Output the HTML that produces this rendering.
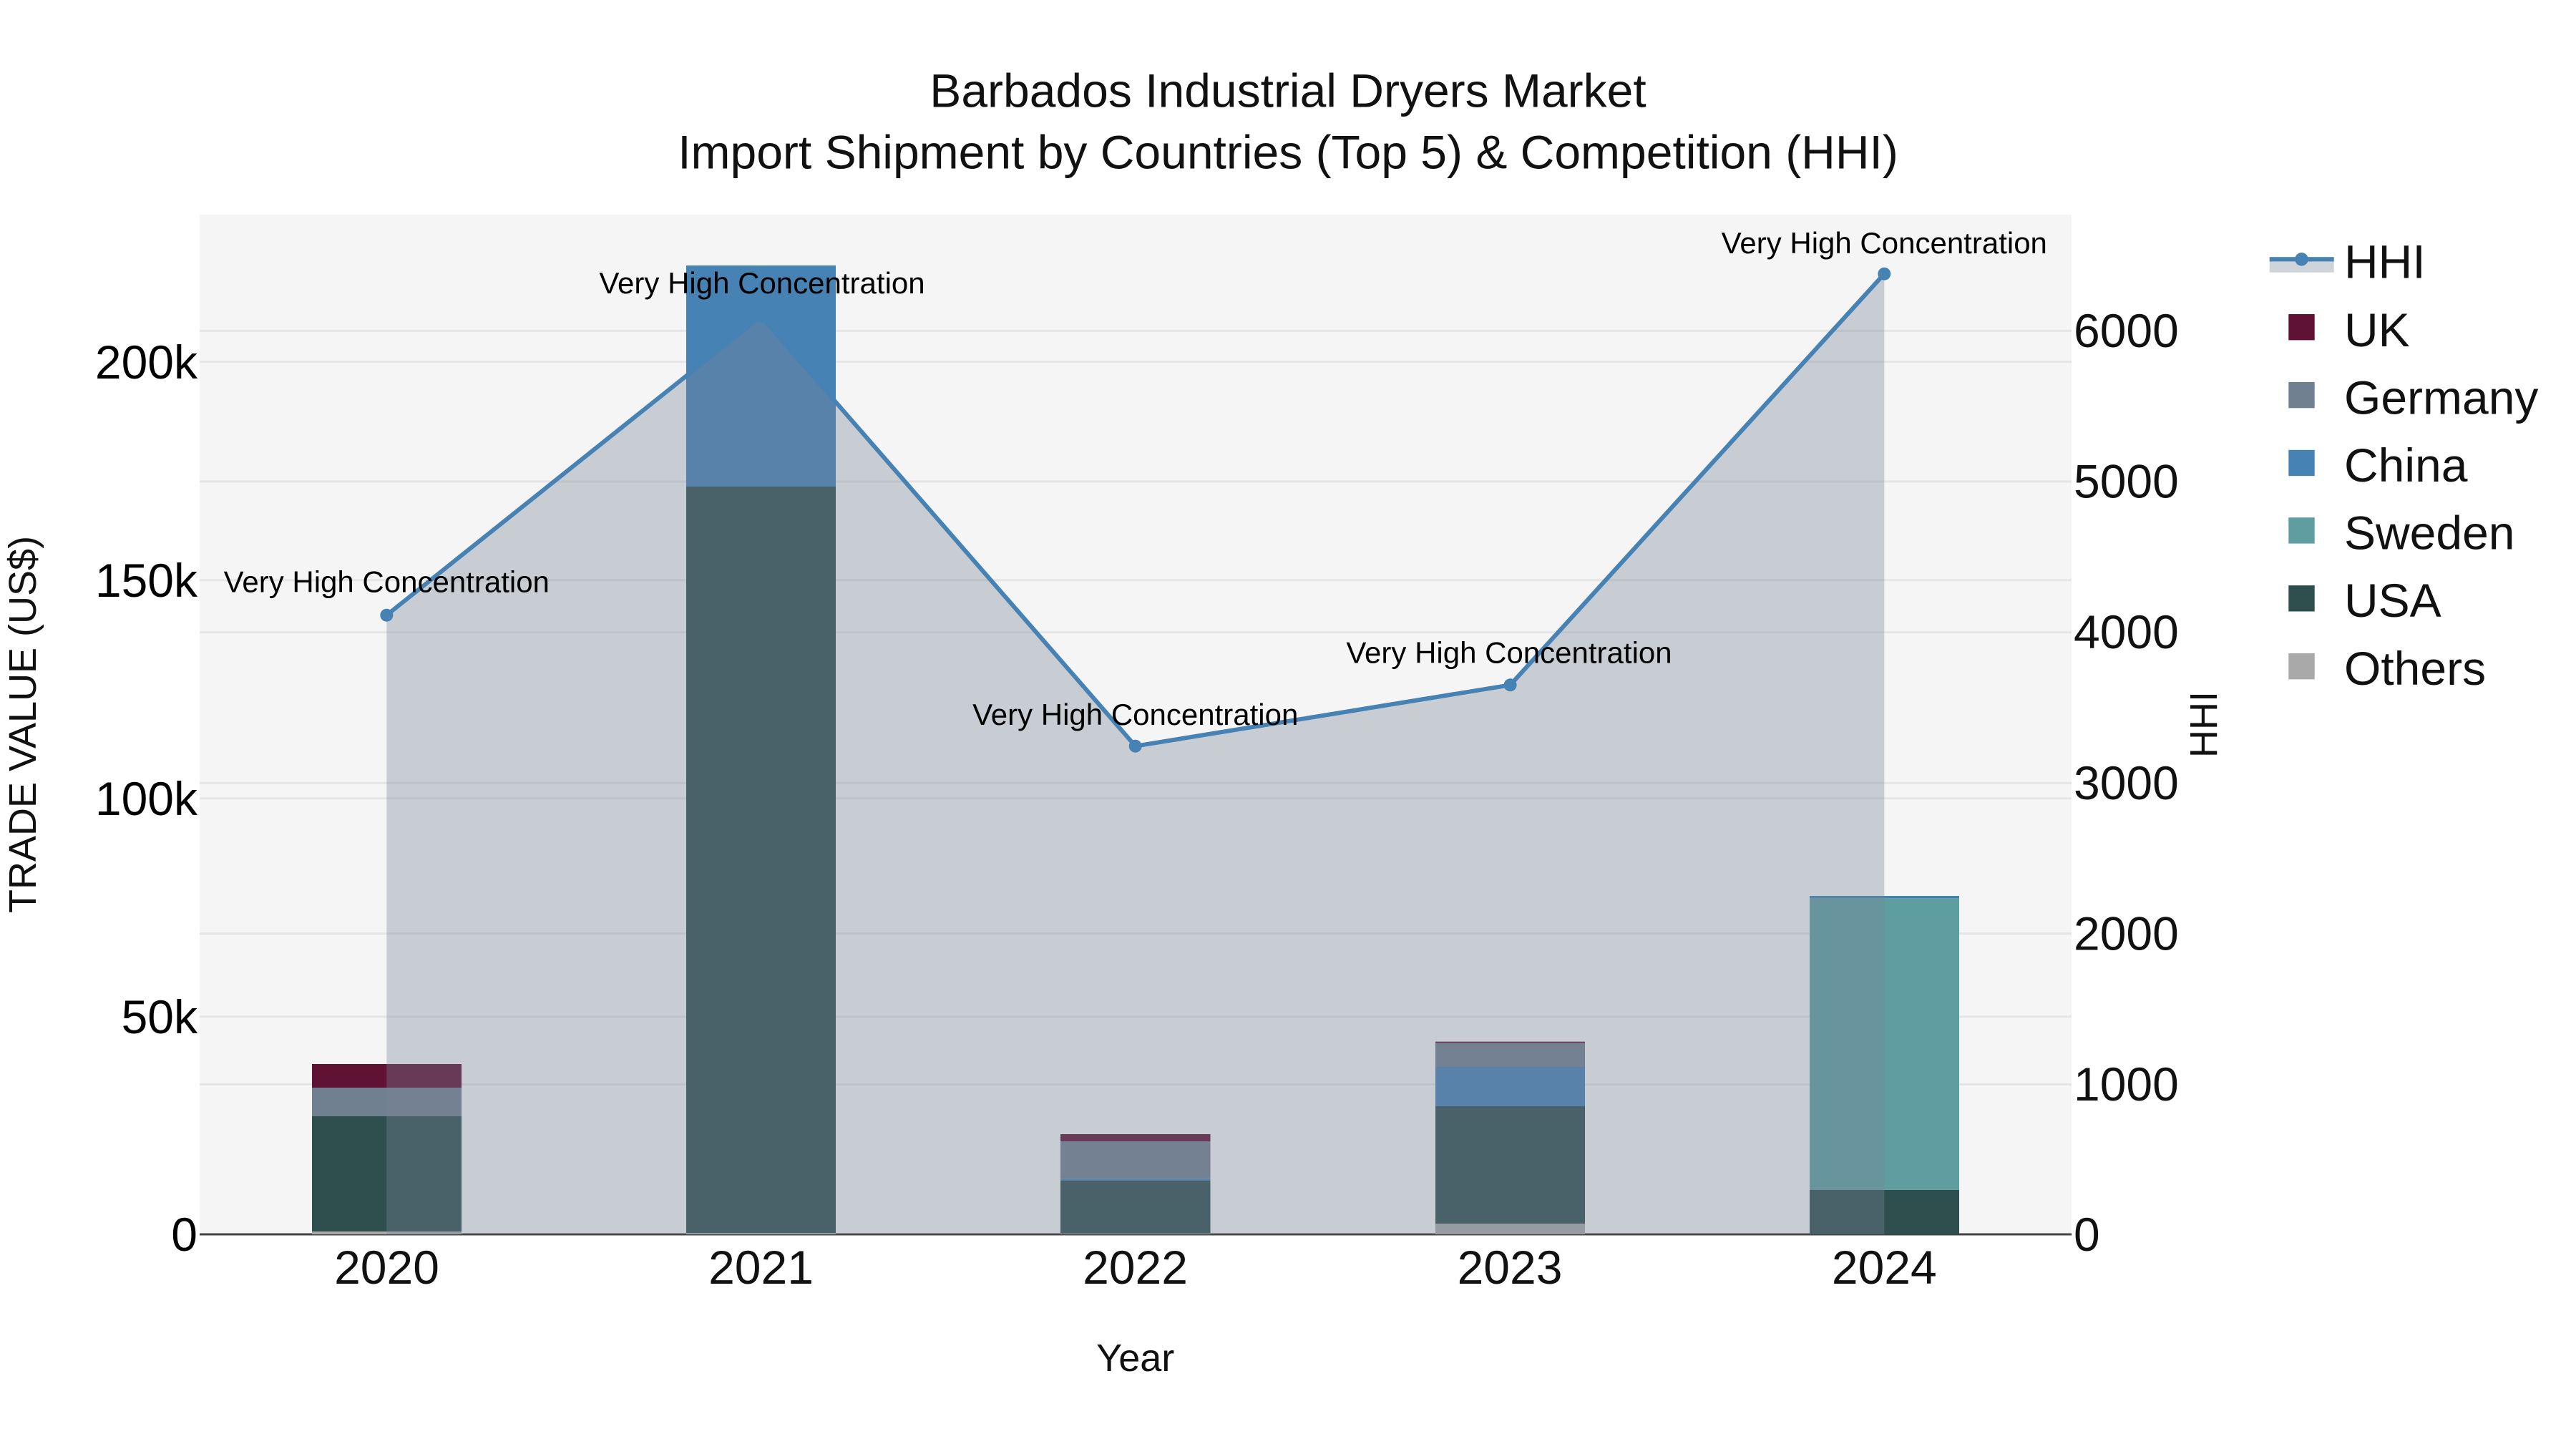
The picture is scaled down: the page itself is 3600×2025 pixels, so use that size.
<!DOCTYPE html>
<html lang="en">
<head>
<meta charset="utf-8">
<title>Barbados Industrial Dryers Market</title>
<style>
html,body{margin:0;padding:0;background:#fff;width:3600px;height:2025px;overflow:hidden}
svg{display:block}
text{font-family:"Liberation Sans",Arial,sans-serif}
</style>
</head>
<body>
<svg xmlns="http://www.w3.org/2000/svg" width="3600" height="2025" viewBox="0 0 3600 2025">
<rect width="3600" height="2025" fill="#fff"/>
<rect x="279" y="300" width="2616" height="1425" fill="#f5f5f5"/>
<!-- grid -->
<g stroke="#e5e5e5" stroke-width="3" fill="none">
<path d="M279 505.6H2895M279 810.7H2895M279 1115.8H2895M279 1420.9H2895"/>
<path d="M279 462.4H2895M279 673H2895M279 883.6H2895M279 1094.2H2895M279 1304.8H2895M279 1515.4H2895"/>
</g>
<!-- axis line -->
<rect x="279" y="1723.5" width="2616" height="3" fill="#444"/>
<!-- bars 2020 -->
<g>
<rect x="436" y="1487" width="209" height="33" fill="#601235"/>
<rect x="436" y="1520" width="209" height="40" fill="#708090"/>
<rect x="436" y="1560" width="209" height="161" fill="#2f4f4f"/>
<rect x="436" y="1721" width="209" height="4" fill="#a9a9a9"/>
<!-- 2021 -->
<rect x="959" y="371" width="209" height="309" fill="#4682b4"/>
<rect x="959" y="680" width="209" height="1043" fill="#2f4f4f"/>
<rect x="959" y="1723" width="209" height="2" fill="#a9a9a9"/>
<!-- 2022 -->
<rect x="1482" y="1585" width="209.5" height="10" fill="#601235"/>
<rect x="1482" y="1595" width="209.5" height="52.3" fill="#708090"/>
<rect x="1482" y="1647.3" width="209.5" height="2.7" fill="#4682b4"/>
<rect x="1482" y="1650" width="209.5" height="73.8" fill="#2f4f4f"/>
<rect x="1482" y="1723.8" width="209.5" height="1.2" fill="#a9a9a9"/>
<!-- 2023 -->
<rect x="2006" y="1455.7" width="209" height="2" fill="#601235"/>
<rect x="2006" y="1457.7" width="209" height="33.3" fill="#708090"/>
<rect x="2006" y="1491" width="209" height="55" fill="#4682b4"/>
<rect x="2006" y="1546" width="209" height="164" fill="#2f4f4f"/>
<rect x="2006" y="1710" width="209" height="15" fill="#a9a9a9"/>
<!-- 2024 -->
<rect x="2529" y="1252" width="209" height="3" fill="#4682b4"/>
<rect x="2529" y="1255" width="209" height="408" fill="#5f9ea0"/>
<rect x="2529" y="1663" width="209" height="62" fill="#2f4f4f"/>
</g>
<!-- HHI area -->
<polygon points="540.3,859.7 1063.5,442 1586.7,1042.7 2110.6,957.3 2633.3,382.7 2633.3,1725 540.3,1725" fill="rgb(120,133,152)" fill-opacity="0.355"/>
<polyline points="540.3,859.7 1063.5,442 1586.7,1042.7 2110.6,957.3 2633.3,382.7" fill="none" stroke="#4682b4" stroke-width="6" stroke-linejoin="round"/>
<g fill="#4682b4">
<circle cx="540.3" cy="859.7" r="9"/>
<circle cx="1063.5" cy="442" r="9"/>
<circle cx="1586.7" cy="1042.7" r="9"/>
<circle cx="2110.6" cy="957.3" r="9"/>
<circle cx="2633.3" cy="382.7" r="9"/>
</g>
<!-- annotations -->
<g font-size="42" fill="#000" text-anchor="middle">
<text x="540.3" y="827.5">Very High Concentration</text>
<text x="1065" y="410">Very High Concentration</text>
<text x="1586.7" y="1013">Very High Concentration</text>
<text x="2109" y="926.7">Very High Concentration</text>
<text x="2633.3" y="354">Very High Concentration</text>
</g>
<!-- title -->
<g font-size="66" fill="#111" text-anchor="middle">
<text x="1800" y="149.3">Barbados Industrial Dryers Market</text>
<text x="1800" y="235.7">Import Shipment by Countries (Top 5) &amp; Competition (HHI)</text>
</g>
<!-- left ticks -->
<g font-size="66" fill="#000" text-anchor="end">
<text x="276" y="528.8">200k</text>
<text x="276" y="833.9">150k</text>
<text x="276" y="1139">100k</text>
<text x="276" y="1444.1">50k</text>
<text x="276" y="1748">0</text>
</g>
<!-- right ticks -->
<g font-size="66" fill="#111">
<text x="2898" y="485">6000</text>
<text x="2898" y="695.6">5000</text>
<text x="2898" y="906.2">4000</text>
<text x="2898" y="1116.8">3000</text>
<text x="2898" y="1327.4">2000</text>
<text x="2898" y="1538">1000</text>
<text x="2898" y="1748">0</text>
</g>
<!-- x ticks -->
<g font-size="66" fill="#111" text-anchor="middle">
<text x="540.5" y="1794">2020</text>
<text x="1063.5" y="1794">2021</text>
<text x="1586.5" y="1794">2022</text>
<text x="2110" y="1794">2023</text>
<text x="2633.3" y="1794">2024</text>
</g>
<!-- axis titles -->
<text x="1586.7" y="1916" font-size="54" fill="#111" text-anchor="middle">Year</text>
<text transform="translate(50 1012.5) rotate(-90)" font-size="54" fill="#111" text-anchor="middle">TRADE VALUE (US$)</text>
<text transform="translate(3098 1012.5) rotate(-90)" font-size="54" fill="#111" text-anchor="middle">HHI</text>
<!-- legend -->
<rect x="3171.7" y="362" width="90" height="18.7" fill="rgb(120,133,152)" fill-opacity="0.355"/>
<rect x="3171.7" y="359.2" width="90" height="6.2" fill="#4682b4"/>
<circle cx="3216.5" cy="362.3" r="9.3" fill="#4682b4"/>
<g>
<rect x="3198.3" y="439" width="36.4" height="36.4" fill="#601235"/>
<rect x="3198.3" y="533.9" width="36.4" height="36.4" fill="#708090"/>
<rect x="3198.3" y="628.8" width="36.4" height="36.4" fill="#4682b4"/>
<rect x="3198.3" y="723.2" width="36.4" height="36.4" fill="#5f9ea0"/>
<rect x="3198.3" y="818.1" width="36.4" height="36.4" fill="#2f4f4f"/>
<rect x="3198.3" y="913" width="36.4" height="36.4" fill="#a9a9a9"/>
</g>
<g font-size="66" fill="#111">
<text x="3276" y="388.3">HHI</text>
<text x="3276" y="484">UK</text>
<text x="3276" y="578.5">Germany</text>
<text x="3276" y="673">China</text>
<text x="3276" y="767.5">Sweden</text>
<text x="3276" y="862">USA</text>
<text x="3276" y="957">Others</text>
</g>
</svg>
</body>
</html>
